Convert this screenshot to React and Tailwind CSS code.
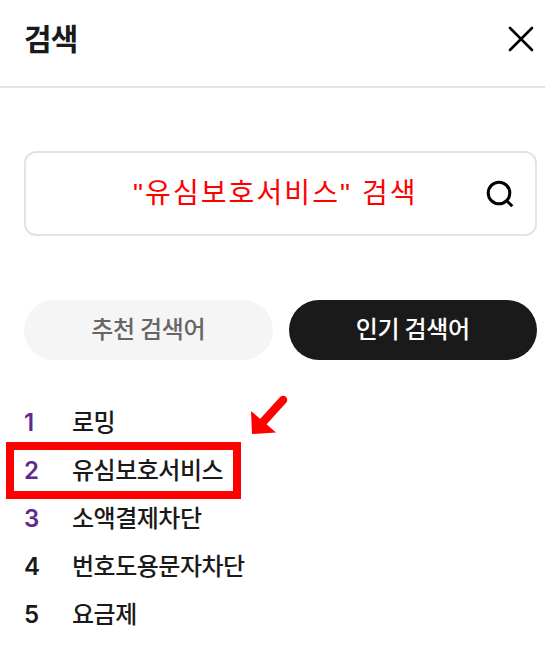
import React from 'react'

const keywords = [
  { rank: 1, text: '로밍' },
  { rank: 2, text: '유심보호서비스' },
  { rank: 3, text: '소액결제차단' },
  { rank: 4, text: '번호도용문자차단' },
  { rank: 5, text: '요금제' },
]

export default function App() {
  return (
    <div className="relative w-[545px] h-[652px] overflow-hidden bg-white text-[#1a1a1a] font-['Noto_Sans_CJK_KR',sans-serif]">
      {/* Header */}
      <header className="flex items-center justify-between h-[88px] pl-6 pr-[10px] pb-[9px] border-b-2 border-[#e3e3e3]">
        <h1 className="pb-[3px] text-[30px] leading-[40px] font-bold tracking-[-0.9px]">검색</h1>
        <button type="button" aria-label="닫기">
          <svg className="w-7 h-7" viewBox="0 0 28 28" fill="none" stroke="#000" strokeWidth="2.6" strokeLinecap="round">
            <path d="M3 3l22 22M25 3L3 25" />
          </svg>
        </button>
      </header>

      <main className="pl-6 pr-2 pt-[63px]">
        {/* Search box */}
        <div className="flex items-center h-[85px] pl-[107px] pr-[21px] border-2 border-[#e3e3e3] rounded-xl">
          <span className="flex-1 pt-px text-[28px] leading-[40px] font-normal tracking-[2.1px] whitespace-nowrap text-[#ff0000] font-['Liberation_Sans','Noto_Sans_CJK_KR',sans-serif]">
            "유심보호서비스" 검색
          </span>
          <button type="button" aria-label="검색">
            <svg className="w-7 h-7" viewBox="0 0 28 28" fill="none" stroke="#000" strokeWidth="3">
              <circle cx="13" cy="13" r="10.8" />
              <path d="M20.4 20.4L26.3 26.3" />
            </svg>
          </button>
        </div>

        {/* Tabs */}
        <div className="flex gap-4 mt-16 text-2xl font-medium tracking-[-0.3px]">
          <button type="button" className="flex-1 h-[60px] pb-[5px] rounded-full bg-[#f5f5f5] text-[#666666]">
            추천 검색어
          </button>
          <button type="button" className="flex-1 h-[60px] pb-[5px] rounded-full bg-[#1a1a1a] text-white">
            인기 검색어
          </button>
        </div>

        {/* Popular keywords */}
        <ol className="mt-[38px]">
          {keywords.map(({ rank, text }) => (
            <li key={rank} className="flex items-center h-12 text-2xl font-medium">
              <span className={`w-12 pt-0.5 font-['Inter'] font-semibold ${rank <= 3 ? 'text-[#5f2a8c]' : 'text-[#1a1a1a]'}`}>
                {rank}
              </span>
              <span className="pb-0.5 tracking-[-0.5px]">{text}</span>
            </li>
          ))}
        </ol>
      </main>

      {/* Highlight frame and arrow */}
      <div className="absolute left-[6px] top-[442px] w-[235px] h-[57px] border-8 border-[#ff0000]" />
      <svg className="absolute left-[248px] top-[392px] w-[42px] h-[44px]" viewBox="0 0 42 44">
        <path d="M35 8L15 30" stroke="#ff0000" strokeWidth="8.5" strokeLinecap="round" />
        <path d="M3 19L4 42L28 40.500Z" fill="#ff0000" />
      </svg>
    </div>
  )
}
